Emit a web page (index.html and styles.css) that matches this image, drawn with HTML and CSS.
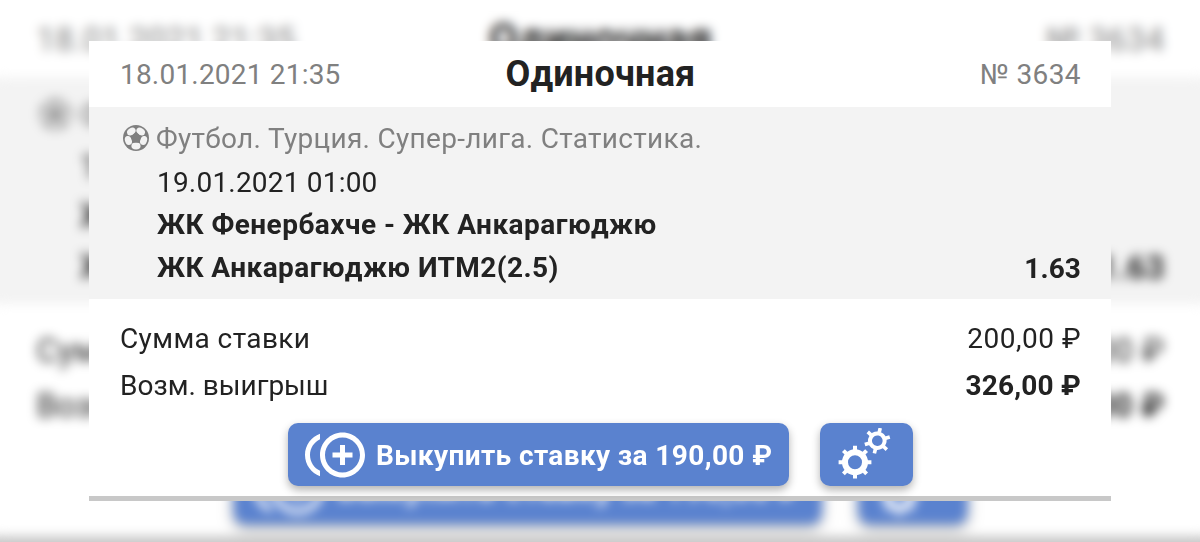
FILE: index.html
```html
<!DOCTYPE html>
<html lang="ru">
<head>
    <meta charset="UTF-8">
    <meta name="viewport" content="width=device-width, initial-scale=1.0">
    <title>Одиночная ставка</title>
    <link rel="stylesheet" href="styles.css">
</head>
<body>
    <div class="card">
        <div class="card-header">
            <span class="date">18.01.2021 21:35</span>
            <span class="title">Одиночная</span>
            <span class="number">№ 3634</span>
        </div>
        <div class="event">
            <div class="event-league">
                <svg class="ball" viewBox="-13 -13 26 26">
                    <circle r="13" fill="#7f7f7f"/>
                    <g fill="#f3f3f3">
                        <ellipse cx="8" rx="3.4" ry="4.6" transform="rotate(-54)"/>
                        <ellipse cx="8" rx="3.4" ry="4.6" transform="rotate(18)"/>
                        <ellipse cx="8" rx="3.4" ry="4.6" transform="rotate(90)"/>
                        <ellipse cx="8" rx="3.4" ry="4.6" transform="rotate(162)"/>
                        <ellipse cx="8" rx="3.4" ry="4.6" transform="rotate(234)"/>
                    </g>
                    <path fill="#7f7f7f" d="M0-5.6L5.3-1.7 3.3 4.5H-3.3L-5.3-1.7z"/>
                </svg>
                <span class="league">Футбол. Турция. Супер-лига. Статистика.</span>
            </div>
            <div class="event-date"><span>19.01.2021 01:00</span></div>
            <div class="event-teams"><span>ЖК Фенербахче - ЖК Анкарагюджю</span></div>
            <div class="event-bet">
                <span>ЖК Анкарагюджю ИТМ2(2.5)</span>
                <span class="odds">1.63</span>
            </div>
        </div>
        <div class="sums">
            <div class="sum-row">
                <span class="stake-label">Сумма ставки</span>
                <span class="stake">200,00 ₽</span>
            </div>
            <div class="sum-row">
                <span>Возм. выигрыш</span>
                <span class="win">326,00 ₽</span>
            </div>
        </div>
        <div class="actions">
            <button type="button" class="btn btn-sell">
                <svg class="icon-coins" viewBox="0 0 24 24" fill="#fff">
                    <path d="M16 8h-2v3h-3v2h3v3h2v-3h3v-2h-3zM2 12c0-2.79 1.64-5.2 4.01-6.32V3.52C2.52 4.76 0 8.09 0 12s2.52 7.24 6.01 8.48v-2.16C3.64 17.2 2 14.79 2 12zm13-9c-4.96 0-9 4.04-9 9s4.04 9 9 9 9-4.04 9-9-4.04-9-9-9zm0 16c-3.86 0-7-3.14-7-7s3.14-7 7-7 7 3.14 7 7-3.14 7-7 7z"/>
                </svg>
                <span class="sell-text">Выкупить ставку за 190,00 ₽</span>
            </button>
            <button type="button" class="btn btn-settings" aria-label="Настройки">
                <svg class="icon-gears" viewBox="0 0 54 54" fill="none" stroke="#fff">
                    <g transform="translate(18 34.2)">
                        <circle r="10" stroke-width="6"/>
                        <path stroke-width="4" d="M0-12v-4.4M0 12v4.4M-12 0h-4.4M12 0h4.4M-8.5-8.5l-3.1-3.1M8.5 8.5l3.1 3.1M-8.5 8.5l-3.1 3.1M8.5-8.5l3.1-3.1"/>
                    </g>
                    <g transform="translate(40.3 12.7) rotate(13)">
                        <circle r="7.3" stroke-width="4"/>
                        <path stroke-width="3.6" d="M0-8.5V-13M0 8.5V13M7.4-4.25l3.9-2.25M-7.4 4.25l-3.9 2.25M-7.4-4.25l-3.9-2.25M7.4 4.25l3.9 2.25"/>
                    </g>
                </svg>
            </button>
        </div>
    </div>
    <script src="script.js"></script>
</body>
</html>
```

FILE: styles.css
```css
* {
    box-sizing: border-box;
}
body {
    margin: 0;
    height: 542px;
    position: relative;
    display: flex;
    align-items: center;
    justify-content: center;
    overflow: hidden;
    background: #fff;
    font-family: Roboto, Arial, sans-serif;
    font-size: 28px;
    color: #222;
    white-space: nowrap;
}
.card {
    position: relative;
    z-index: 1;
    width: 1022px;
    height: 460px;
    background: #fff;
    border-bottom: 5px solid #c8c8c8;
}
/* enlarged blurred copy behind the card */
.card.backdrop {
    position: absolute;
    z-index: 0;
    top: 41px;
    left: 89px;
    transform: scale(1.174, 1.178);
    filter: blur(4.5px);
}
/* carry the colours past the window edges so the blur does not fade there */
.backdrop .event {
    box-shadow: -20px 0 #f3f3f3, 20px 0 #f3f3f3;
}
.backdrop::after {
    content: "";
    position: absolute;
    left: -20px;
    right: -20px;
    bottom: -25px;
    height: 25px;
    background: #c8c8c8;
}
.card-header {
    height: 66px;
    padding: 0 30px 0 31px;
    display: grid;
    grid-template-columns: 1fr auto 1fr;
    align-items: center;
    color: #808080;
}
.date, .event-date {
    letter-spacing: 0.2px;
}
.title {
    font-size: 36px;
    font-weight: 700;
    letter-spacing: 0.2px;
    color: #222;
}
.number {
    text-align: right;
    letter-spacing: 0.4px;
}
.event {
    height: 192px;
    padding: 9px 30px 0 68px;
    background: #f3f3f3;
}
.event-league {
    display: flex;
    align-items: center;
    height: 44px;
    margin-left: -34px;
    color: #808080;
}
.ball {
    width: 26px;
    height: 26px;
    margin-right: 7px;
}
.league {
    letter-spacing: 0.3px;
}
.event-date {
    line-height: 45px;
}
.event-teams {
    line-height: 40px;
    font-weight: 700;
    letter-spacing: 0.46px;
}
.event-bet {
    display: flex;
    justify-content: space-between;
    line-height: 45px;
    font-weight: 700;
    letter-spacing: 0.44px;
}
.odds {
    letter-spacing: 0.1px;
    line-height: 47px;
}
.sums {
    padding: 16px 30px 0 31px;
}
.sum-row {
    display: flex;
    justify-content: space-between;
    line-height: 47px;
}
.stake-label {
    letter-spacing: 0.4px;
}
.stake {
    letter-spacing: 0.5px;
}
.win {
    font-weight: 700;
    letter-spacing: 0.2px;
}
.actions {
    display: flex;
    gap: 31px;
    padding: 14px 0 0 199px;
}
.btn {
    height: 63px;
    padding: 0;
    display: flex;
    align-items: center;
    border: none;
    border-radius: 10px;
    background: #5a82cf;
    color: #fff;
    font: inherit;
    font-weight: 700;
    box-shadow: 0 4px 9px rgba(0,0,0,0.3);
}
.btn-sell {
    width: 501px;
    padding-left: 17px;
}
.icon-coins {
    width: 60px;
    height: 60px;
    margin-right: 11px;
}
.sell-text {
    letter-spacing: 0.38px;
    padding-top: 2px;
}
.btn-settings {
    width: 93px;
    padding-left: 17px;
}
.icon-gears {
    width: 54px;
    height: 54px;
}
```

FILE: script.js
```js
const card = document.querySelector('.card');
const backdrop = card.cloneNode(true);
backdrop.classList.add('backdrop');
backdrop.setAttribute('aria-hidden', 'true');
document.body.prepend(backdrop);
```
